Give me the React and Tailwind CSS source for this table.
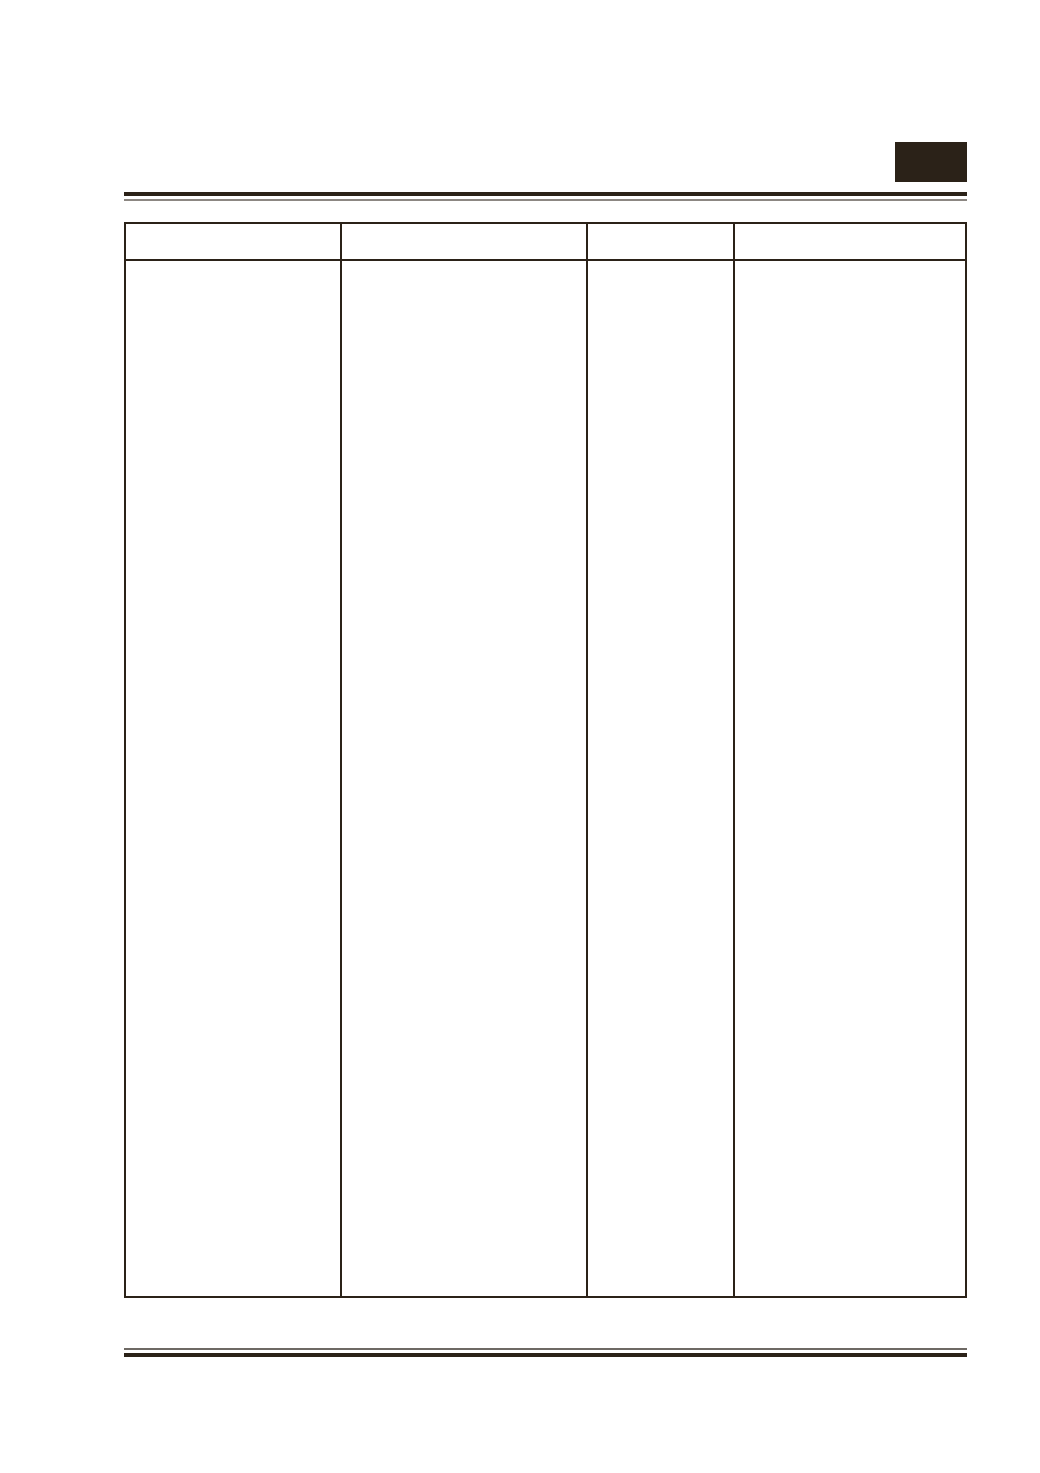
export default function App() {
  const cols = ["w-[216px]", "w-[246px]", "w-[147px]", "flex-1"];
  return (
    <div className="min-h-screen bg-white pl-[124px] pr-[73px] pt-[142px]" style={{ fontFamily: '"Liberation Sans", Arial, sans-serif' }}>
      {/* Header */}
      <div className="flex justify-end">
        <div className="w-[72px] h-[40px] bg-[#2b2218]" />
      </div>
      <div className="mt-[10px] h-[4px] bg-[#2b2218]" />
      <div className="mt-[3px] h-[2px] bg-[#8c8782]" />

      {/* Table */}
      <div className="mt-[21px] h-[1076px] border-2 border-[#2b2218] flex flex-col">
        <div className="flex h-[37px] border-b-2 border-[#2b2218]">
          {cols.map((c, i) => (
            <div key={i} className={`${c} ${i < 3 ? "border-r-2 border-[#2b2218]" : ""}`} />
          ))}
        </div>
        <div className="flex flex-1">
          {cols.map((c, i) => (
            <div key={i} className={`${c} ${i < 3 ? "border-r-2 border-[#2b2218]" : ""}`} />
          ))}
        </div>
      </div>

      {/* Footer */}
      <div className="mt-[50px] h-[2px] bg-[#6e6964]" />
      <div className="mt-[3px] h-[4px] bg-[#2b2218]" />
    </div>
  );
}
